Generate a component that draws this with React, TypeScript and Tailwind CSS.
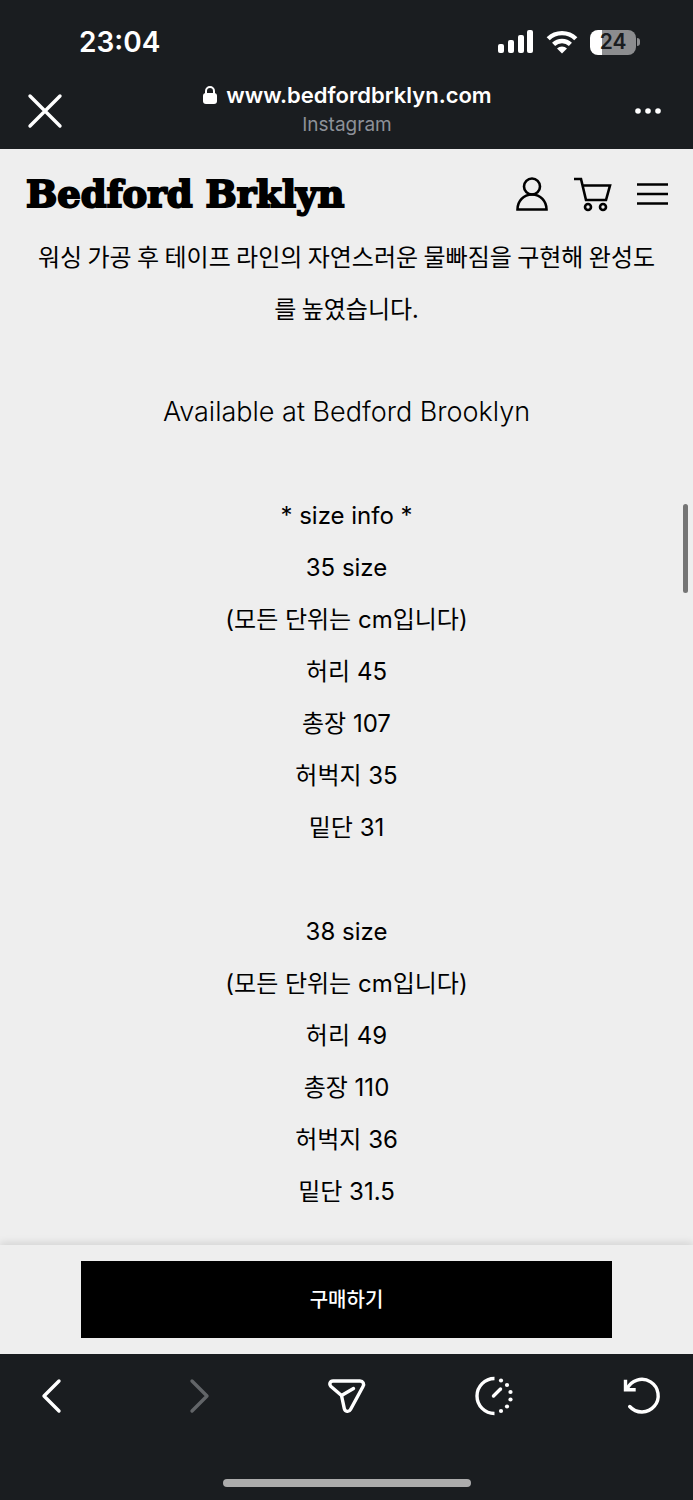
import React from "react";

type Line = { text: string; style?: string };

const description: Line[] = [
  {
    text: "워싱 가공 후 테이프 라인의 자연스러운 물빠짐을 구현해 완성도를 높였습니다.",
    style: "font-['Noto_Sans_CJK_KR',sans-serif] text-2xl",
  },
  { text: "" },
  { text: "Available at Bedford Brooklyn", style: "text-[27px] font-light" },
  { text: "" },
  { text: "* size info *" },
  { text: "35 size" },
  { text: "(모든 단위는 cm입니다)" },
  { text: "허리 45" },
  { text: "총장 107" },
  { text: "허벅지 35" },
  { text: "밑단 31" },
  { text: "" },
  { text: "38 size" },
  { text: "(모든 단위는 cm입니다)" },
  { text: "허리 49" },
  { text: "총장 110" },
  { text: "허벅지 36" },
  { text: "밑단 31.5" },
];

const StatusBar = () => (
  <div className="flex h-[76px] items-center justify-between pt-2 pr-[53px] pl-[79px]">
    <span className="text-[28px] leading-8 font-semibold">23:04</span>
    <div className="flex items-center gap-3">
      <svg width="36" height="24" viewBox="0 0 36 24" fill="currentColor" aria-hidden="true">
        <rect x="0" y="14" width="6" height="9" rx="2" />
        <rect x="10" y="10" width="6" height="13" rx="2" />
        <rect x="20" y="5" width="6" height="18" rx="2" />
        <rect x="29" y="0" width="6" height="23" rx="2" />
      </svg>
      <svg width="32" height="24" viewBox="0 0 32 24" aria-hidden="true">
        <g fill="none" stroke="currentColor" strokeWidth="4.4">
          <path d="M2.2 8.8a19.5 19.5 0 0 1 27.6 0" />
          <path d="M7.6 14.4a12 12 0 0 1 16.8 0" />
        </g>
        <path d="M16 23.5l-5-5a7 7 0 0 1 10 0z" fill="currentColor" />
      </svg>
      <div className="flex items-center gap-px">
        <div className="flex h-[25px] w-[46px] items-center justify-center rounded-lg bg-linear-to-r from-white from-25% to-[#8c8d8f] to-25% text-[21px] leading-6 font-semibold text-[#1a1d20]">
          24
        </div>
        <div className="h-2 w-[3px] rounded-r-full bg-[#8c8d8f]" />
      </div>
    </div>
  </div>
);

const BrowserBar = () => (
  <div className="flex h-[73px] items-center justify-between pr-[23px] pb-1 pl-6">
    <button type="button" aria-label="Close" className="flex w-11">
      <svg width="42" height="42" viewBox="0 0 42 42" fill="none" stroke="currentColor" strokeWidth="3.4" strokeLinecap="round">
        <path d="M6 6l30 30M36 6L6 36" />
      </svg>
    </button>
    <div className="flex flex-col items-center pb-1">
      <div className="flex items-center gap-2">
        <svg width="16" height="20" viewBox="0 0 16 20" aria-hidden="true">
          <rect x="1" y="8" width="14" height="11" rx="3" fill="currentColor" />
          <path d="M4 10V6a4 4 0 0 1 8 0v4" fill="none" stroke="currentColor" strokeWidth="2" />
        </svg>
        <span className="text-[22px] leading-8 font-semibold">
          www.bedfordbrklyn.com
        </span>
      </div>
      <span className="text-[19px] leading-7 text-[#8d9199]">Instagram</span>
    </div>
    <button type="button" aria-label="More" className="flex w-11 justify-center">
      <svg width="28" height="8" viewBox="0 0 28 8" fill="currentColor">
        <circle cx="4" cy="4" r="2.8" />
        <circle cx="14" cy="4" r="2.8" />
        <circle cx="24" cy="4" r="2.8" />
      </svg>
    </button>
  </div>
);

const ShopHeader = () => (
  <header className="flex h-[81px] items-center justify-between pt-2 pr-[21px] pl-[26px]">
    <a
      href="#"
      className="font-['DejaVu_Serif',serif] text-[37px] leading-10 font-bold [-webkit-text-stroke:2px_black]"
    >
      Bedford Brklyn
    </a>
    <div className="flex items-center gap-5">
      <button type="button" aria-label="Account">
        <svg width="40" height="40" viewBox="0 0 40 40" fill="none" stroke="currentColor" strokeWidth="2.6">
          <circle cx="20" cy="12.5" r="8" />
          <path d="M5.500 35.500c0-8.500 6-15 14.500-15s14.500 6.500 14.500 15z" />
        </svg>
      </button>
      <button type="button" aria-label="Cart">
        <svg width="40" height="40" viewBox="0 0 40 40" fill="none" stroke="currentColor" strokeWidth="2.6">
          <path d="M2 5h7l5 21h20l4-14.500H10.500" />
          <circle cx="16" cy="33" r="3" />
          <circle cx="31" cy="33" r="3" />
        </svg>
      </button>
      <button type="button" aria-label="Menu">
        <svg width="40" height="40" viewBox="0 0 40 40" stroke="currentColor" strokeWidth="2.6">
          <path d="M5 10.500h31M5 20h31M5 29.500h31" />
        </svg>
      </button>
    </div>
  </header>
);

const BottomNav = () => (
  <nav className="flex items-center justify-between px-[27px] pt-[18px]">
    <button type="button" aria-label="Back">
      <svg width="48" height="48" viewBox="0 0 48 48" fill="none" stroke="currentColor" strokeWidth="3.4" strokeLinecap="round" strokeLinejoin="round">
        <path d="M32 9L17 24l15 15" />
      </svg>
    </button>
    <button type="button" aria-label="Forward" className="text-[#626568]">
      <svg width="48" height="48" viewBox="0 0 48 48" fill="none" stroke="currentColor" strokeWidth="3.4" strokeLinecap="round" strokeLinejoin="round">
        <path d="M17 9l15 15-15 15" />
      </svg>
    </button>
    <button type="button" aria-label="Share">
      <svg width="48" height="48" viewBox="0 0 48 48" fill="none" stroke="currentColor" strokeWidth="3.4" strokeLinecap="round" strokeLinejoin="round">
        <path d="M10 9h27c3 0 4.500 3 3 5.500L27.500 37.500c-1.500 2.800-5.500 2.300-6.200-.8L18.500 23.500 8 14.500C5.800 12.300 7 9 10 9z" />
        <path d="M18.500 23.500l12-7" />
      </svg>
    </button>
    <button type="button" aria-label="History">
      <svg width="48" height="48" viewBox="0 0 48 48" fill="none" stroke="currentColor" strokeWidth="3.4" strokeLinecap="round">
        <path d="M24.500 6.500a17.500 17.500 0 0 0 0 35" strokeLinecap="butt" />
        <path d="M23.500 24l7-7" />
        <g fill="currentColor" stroke="none">
          <circle cx="31" cy="8.500" r="2.100" />
          <circle cx="37" cy="13" r="2.100" />
          <circle cx="40.500" cy="20" r="2.100" />
          <circle cx="40.500" cy="27.500" r="2.100" />
          <circle cx="37" cy="34.500" r="2.100" />
          <circle cx="31" cy="39" r="2.100" />
        </g>
      </svg>
    </button>
    <button type="button" aria-label="Reload">
      <svg width="48" height="48" viewBox="0 0 48 48" fill="none" stroke="currentColor" strokeWidth="3.4" strokeLinecap="round">
        <path d="M9 17a16.300 16.300 0 1 1 2.700 17.500" />
        <path d="M7.500 9.500v8.300h8.500" strokeLinecap="square" />
      </svg>
    </button>
  </nav>
);

const App = () => {
  return (
    <div className="flex min-h-screen flex-col bg-[#1a1d20] font-['Inter','Noto_Sans_CJK_KR',sans-serif] text-white">
      <StatusBar />
      <BrowserBar />
      <main className="relative bg-[#eeeeee] text-black">
        <ShopHeader />
        <section className="px-8 pb-[27px] text-center">
          {description.map((line, i) => (
            <p
              key={i}
              className={`min-h-[52px] leading-[52px] ${line.style || "text-2xl"}`}
            >
              {line.text}
            </p>
          ))}
        </section>
        {/* scroll thumb */}
        <div className="absolute top-[355px] right-[5px] h-[89px] w-[5px] rounded-full bg-[#757575]" />
        <div className="flex justify-center bg-[#eeeeee] py-4 shadow-[0_-2px_8px_rgba(0,0,0,0.12)]">
          <button
            type="button"
            className="h-[77px] w-[531px] bg-black text-xl font-medium text-white"
          >
            구매하기
          </button>
        </div>
      </main>
      <BottomNav />
      <div className="mt-auto flex justify-center pb-[13px]">
        <div className="h-2 w-[248px] rounded-full bg-[#acacac]" />
      </div>
    </div>
  );
};

export default App;
